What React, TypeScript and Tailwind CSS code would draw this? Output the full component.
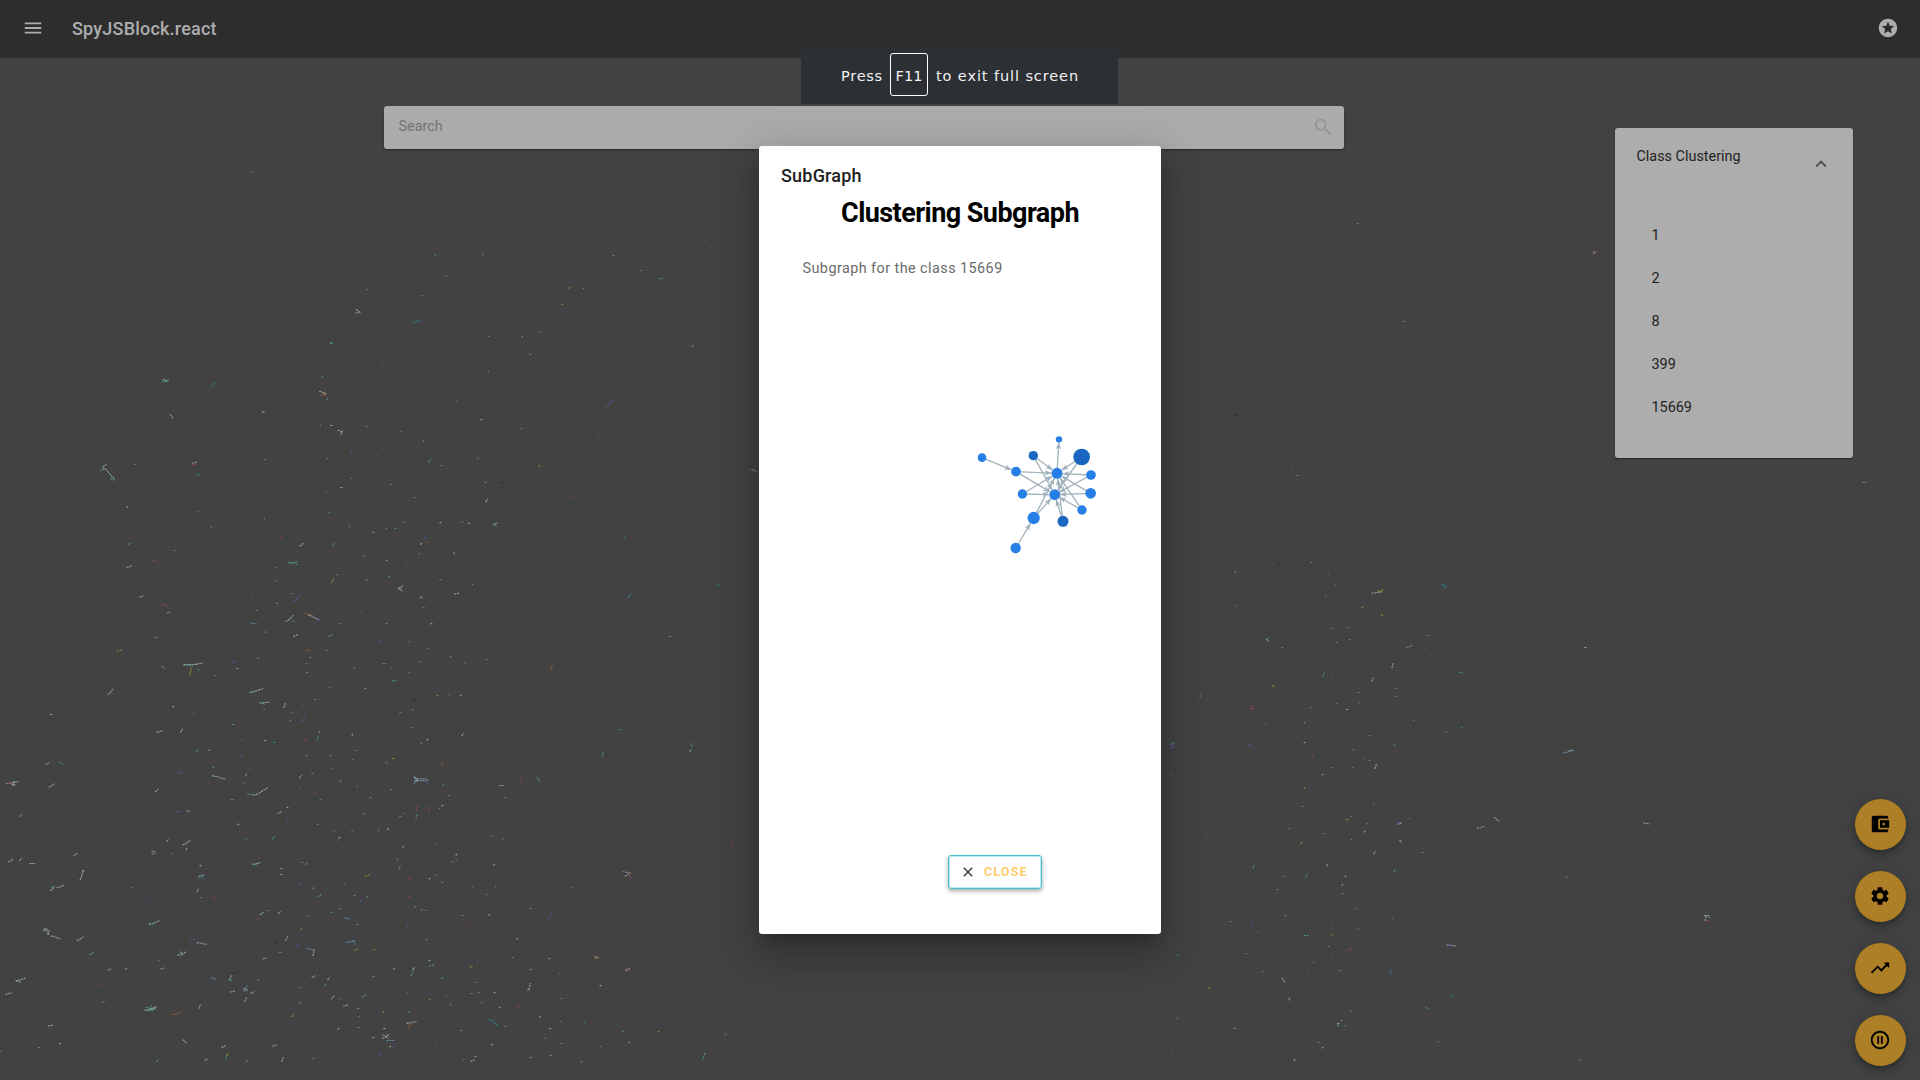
import React from "react";
import {
  MdAccountBalanceWallet,
  MdClose,
  MdExpandLess,
  MdMenu,
  MdPauseCircleOutline,
  MdSearch,
  MdSettings,
  MdStars,
  MdTrendingUp,
} from "react-icons/md";

const TONES: Record<string, string> = {
  w: "#9fb0b0",
  g: "#7f8a8a",
  t: "#4f9a7c",
  b: "#6590a8",
  p: "#5a54a0",
  r: "#8f4552",
  o: "#9a6238",
  y: "#8a9440",
  d: "#1d2a33",
  c: "#2a8c9c",
};

type Region = { x: number; y: number; sx: number; sy: number; marks: string };

// Each mark is "x,y,width,rise,tone" in the region's own units; a negative rise slopes down.
const REGIONS: Region[] = [
  {
    x: 0, y: 540, sx: 3, sy: 2.904,
    marks:
      "387,11,11,5,t 523,30,4,1,g 904,14,14,9,w 1000,14,8,9,t 1092,46,8,4,g 465,62,18,-5,r 389,78,17,5,w 877,68,30,-7,t 880,66,24,4,t 828,80,6,3,t 830,119,7,4,t 1012,100,5,2,g 996,118,10,12,y 1098,114,5,7,g 423,163,12,4,w 757,165,5,7,r 497,189,20,-10,r 504,210,10,3,w 878,155,4,1,t 892,167,22,20,p 831,183,9,-3,b 768,205,6,0,g 1083,207,6,0,p 924,215,26,-8,o 940,226,34,-14,w 955,232,8,6,p 867,227,24,18,w 881,237,6,-5,t 761,243,20,-3,b 1018,242,5,2,g 797,269,7,-5,t 468,282,11,2,b 886,276,14,6,w 991,277,12,6,b 1137,295,3,9,p 357,322,15,2,y 924,321,15,-3,o 979,322,6,-3,g 932,341,10,0,g 776,344,9,0,t 920,360,5,0,b 570,362,42,0,w 565,365,30,-2,t 597,359,20,3,w 571,383,1,24,y 703,354,12,5,p 489,371,11,-5,b 595,377,7,3,t 713,374,5,2,w 1064,371,8,3,t 645,394,7,0,t 922,384,8,0,g 770,436,42,12,w 757,440,16,3,t 330,440,18,19,w 989,429,4,3,b 1097,431,8,0,b 946,464,8,0,t 794,471,30,3,w 790,474,10,-2,t 853,481,5,14,w 878,501,5,4,t 792,493,8,-3,t 1134,474,4,11,p 906,482,6,3,r 520,483,6,5,w 155,506,10,0,w 581,503,4,1,o 911,519,12,16,p 872,525,4,2,t 700,536,9,0,t 479,556,19,4,w 544,552,8,10,w 728,579,4,1,o 796,583,9,0,w 822,588,8,0,c 916,583,9,-2,r 951,577,5,13,t 958,555,1,8,g 1058,566,4,6,w 593,610,10,4,t 627,612,9,-2,b 723,629,9,0,p 919,627,6,2,b 990,626,4,1,b 1070,611,4,1,b 1057,636,7,4,y 143,649,11,5,w 183,648,11,-6,t 639,660,6,-4,t 751,666,5,1,o 998,664,4,4,t 542,675,17,4,p 655,691,40,-10,w 657,689,10,2,r 739,681,8,4,w 733,703,8,3,t 624,706,9,3,r 901,686,7,8,w 937,679,7,-3,g 1020,699,5,8,b 38,705,38,6,w 30,707,20,-2,r 40,709,12,-2,w 39,706,2,14,w 154,713,18,10,w 1073,716,8,0,o 468,728,10,7,w 780,729,44,22,w 750,740,20,-2,t 901,723,8,-3,p 949,732,3,10,r 938,740,7,-2,p 960,753,5,2,t 696,753,11,0,t 1112,747,4,0,g 861,777,7,-3,w 535,789,14,0,p 564,789,10,-5,w 62,799,10,6,b 838,792,12,6,w 1093,793,8,3,y 862,817,6,-5,p 714,826,9,-3,w 951,826,5,-1,g 1058,846,8,0,o 1003,843,8,3,t 1134,844,4,3,t 738,866,9,3,t 821,864,9,9,t 1018,863,6,5,w 1030,889,4,3,r 841,880,5,0,p 501,874,9,5,w 559,879,25,14,w 558,896,5,5,w 558,903,6,-4,r 517,909,7,2,o 460,911,12,3,w 460,906,12,-3,w 1058,908,6,0,r 225,913,12,6,w 31,930,13,7,w 61,927,8,8,w 97,940,19,0,w 777,923,5,2,r 768,940,24,6,w 764,941,16,-4,t 907,937,8,0,t 918,938,4,7,b 600,945,6,5,w 603,973,18,4,w 604,981,18,3,c 245,974,10,27,w 251,961,9,2,w 157,1011,15,13,w 158,1009,10,-5,t 182,1006,23,7,w 843,954,6,2,w 843,971,8,0,w 730,977,4,1,r 1101,974,15,5,y 900,998,4,9,p 1033,997,4,1,t 940,1013,6,-5,g 397,1008,4,2,t 593,1019,1,10,w 604,1038,8,3,b 641,1039,8,-15,r 957,1031,14,9,t 1064,1033,5,0,g 1101,1034,7,4,t 447,1049,9,2,p 1084,1048,8,5,p 1020,1070,9,3,g 994,1081,9,-3,t 785,1085,11,7,w 806,1076,6,1,t 837,1083,10,5,w 776,1098,9,5,r 921,1091,5,3,t 1041,1100,16,-4,b 1073,1116,6,2,b 462,1110,34,12,w 456,1114,20,4,t 385,1131,6,-3,r 904,1128,2,6,y 140,1136,15,-18,w 137,1131,16,5,w 145,1140,6,14,w 167,1154,30,-9,w 240,1156,22,13,w 578,1161,14,-5,p 605,1173,30,-5,w 860,1157,8,12,w 829,1169,8,4,d 1050,1166,30,4,b 1060,1169,8,-10,b 893,1178,6,-8,p 931,1189,24,-5,b 941,1197,4,20,w 275,1202,12,7,b 546,1201,26,10,w 543,1202,7,-10,w 536,1205,9,2,t 840,1197,10,0,b 1070,1190,12,6,y 1122,1189,10,3,y 792,1214,12,3,w 475,1220,4,1,g 379,1244,9,4,w 327,1246,11,3,w 486,1245,12,3,w 706,1256,19,6,d 691,1271,5,16,w 690,1278,14,-8,t 640,1273,14,-4,b 775,1277,9,4,g 984,1273,7,7,w 977,1290,4,7,t 940,1268,11,5,w 1119,1268,6,2,b 62,1276,30,8,w 54,1281,14,-4,w 304,1291,7,4,r 735,1303,10,18,b 736,1306,14,-5,w 698,1311,16,3,w 757,1315,12,4,w 900,1299,6,1,t 25,1316,19,5,w 311,1339,10,3,b 737,1334,8,12,w 996,1329,10,9,w 1092,1323,15,7,b 1018,1332,5,2,t 902,1342,8,6,g 451,1360,37,11,w 451,1360,30,-6,t 450,1358,6,14,t 460,1360,16,6,w 447,1365,22,0,t 597,1354,6,12,w 1037,1353,14,3,w 1074,1360,8,0,g 530,1375,28,7,o 878,1382,10,7,y 1076,1384,5,1,g 152,1409,14,2,w 1076,1415,7,0,b 1015,1420,8,4,w 1119,1446,7,2,w 554,1455,11,-10,w 180,1461,9,3,w 118,1473,8,0,b 671,1472,13,6,w 822,1469,13,4,w 1,1486,4,3,b 1137,1490,3,12,p 680,1501,4,18,t 681,1495,4,9,y 620,1508,11,4,w 473,1511,1,9,t 742,1512,8,5,b 847,1508,6,13,w 941,1505,4,1,g",
  },
  {
    x: 380, y: 540, sx: 3, sy: 2.904,
    marks:
      "124,9,8,5,w 143,8,7,0,r 117,38,6,4,t 224,38,8,-4,w 364,37,5,-5,r 19,60,6,-3,w 80,65,6,1,r 182,65,4,1,p 28,106,8,3,t 182,114,6,1,g 62,138,16,12,w 62,143,12,-13,w 276,129,5,1,g 123,167,9,-4,w 230,154,15,2,w 749,160,9,13,c 1016,128,11,6,c 1,194,4,1,r 130,196,6,2,b 18,242,5,2,y 155,243,9,2,w 872,279,10,0,g 89,296,3,3,t 143,316,3,3,g 211,337,4,3,g 318,346,5,1,g 120,352,7,0,t 257,357,4,4,g 13,358,12,0,t 35,371,5,0,t 89,384,4,1,g 514,371,6,14,o 42,408,17,4,t 172,451,6,0,y 209,450,3,3,t 240,453,6,3,w 100,465,10,4,d 98,493,3,4,g 60,500,7,2,t 98,544,6,0,g 246,564,6,8,w 143,579,3,5,w 123,591,6,-4,g 719,550,11,0,c 139,622,4,0,r 667,622,5,14,t 41,634,7,0,y 19,647,4,2,t 186,652,10,-6,o 940,604,26,0,d 934,598,6,-12,t 932,610,4,6,w 105,700,12,14,b 107,694,10,-12,w 123,697,45,3,w 120,694,38,0,b 138,705,14,-10,p 108,692,14,-5,b 190,709,4,8,t 425,695,4,18,r 474,695,10,-12,t 364,714,13,0,w 377,747,4,0,g 35,724,9,0,g 209,742,6,1,t 186,770,7,2,w 177,781,3,3,g 108,783,1,22,r 109,802,2,14,t 149,781,2,20,r 61,803,9,2,t 71,795,3,2,o 26,840,8,-5,w 336,857,6,3,t 369,868,6,2,y 70,889,7,5,w 168,881,7,0,o 230,912,4,5,w 230,932,4,3,t 216,935,5,2,t 51,929,5,-3,g 57,950,2,11,b 344,943,9,4,w 1055,879,4,18,r 740,966,24,-3,w 741,971,16,8,w 748,975,10,-16,r 733,968,10,-8,d 752,983,6,-3,p 88,984,16,-3,r 147,983,5,4,w 168,974,6,-2,t 186,995,8,0,t 276,1005,5,2,g 347,1007,3,3,g 576,1008,6,0,o 87,1034,9,3,r 320,1030,5,-3,g 106,1064,7,4,t 125,1073,3,4,g 137,1076,5,0,t 452,1070,5,0,g 508,1094,11,18,p 248,1090,4,0,g 327,1088,8,4,w 122,1108,5,0,r 83,1119,2,10,p 268,1120,7,6,r 412,1156,7,4,w 125,1154,8,3,r 140,1161,4,3,g 396,1212,5,0,g 509,1216,5,2,w 650,1211,15,6,o 650,1211,12,-6,w 741,1246,14,6,w 741,1246,12,-7,r 43,1243,9,4,w 96,1253,11,27,t 100,1245,8,4,w 155,1235,15,3,t 147,1222,6,2,w 186,1271,8,5,t 275,1239,8,5,y 293,1225,7,5,p 452,1248,5,1,w 537,1259,4,4,o 286,1284,6,0,b 448,1297,4,20,w 445,1305,8,3,w 662,1293,6,4,w 83,1315,5,0,o 149,1334,4,3,y 200,1322,4,1,o 211,1348,6,3,t 274,1316,6,0,g 296,1314,5,3,b 342,1315,6,2,w 305,1343,12,3,o 359,1358,5,3,w 412,1357,5,18,r 545,1331,4,1,g 581,1364,4,4,p 9,1368,5,5,y 89,1368,3,5,t 482,1384,8,4,w 540,1398,5,0,t 612,1401,4,0,c 340,1401,26,-18,c 95,1402,30,5,w 87,1409,4,19,o 375,1412,5,0,g 13,1419,8,3,w 245,1424,7,0,g 512,1418,8,2,w 730,1426,8,-3,t 834,1427,4,1,y 1037,1437,5,3,t 495,1448,5,-2,t 17,1443,20,12,w 17,1442,18,-10,w 32,1452,25,0,b 44,1472,9,3,p 30,1470,8,3,w 167,1458,4,2,p 337,1464,9,3,w 545,1462,4,0,g 748,1460,8,0,g 662,1470,5,0,g 969,1499,10,22,t 276,1512,12,4,w 285,1500,6,1,w 251,1510,3,3,t 452,1504,4,3,w 512,1497,4,1,w 604,1513,7,3,t",
  },
  {
    x: 0, y: 140, sx: 2.0605, sy: 3,
    marks:
      "520,96,4,-4,t 897,342,4,6,t 994,344,3,3,g 919,409,5,-4,g 756,447,2,4,g 870,467,3,1,t 738,515,10,-12,w 736,516,8,5,w 859,545,14,8,c 684,607,5,1,t 684,610,5,1,t 788,667,5,4,p 1454,304,3,1,r 1265,346,3,1,g 1321,391,3,1,t 1364,415,8,2,t 1173,441,6,5,y 1203,444,3,3,b 1159,493,3,1,y 1114,576,4,-3,t 1007,590,3,0,g 1077,588,5,4,g 1094,643,5,0,t 1007,693,4,4,g 1426,617,4,8,g 342,721,14,6,t 342,721,10,-8,w 342,723,14,0,t 439,732,8,10,c 665,709,2,7,t 667,760,11,10,o 665,757,14,-8,w 667,762,9,0,o 670,764,6,4,o 674,775,3,9,g 354,829,7,-12,w 543,817,10,0,p 542,814,6,2,w 941,782,3,3,o 978,826,6,6,r 992,838,5,3,w 1255,790,17,20,p 660,855,3,3,g 684,857,5,0,w 702,875,11,-8,w 704,877,4,12,w 755,858,4,-3,b 827,873,4,-3,t 873,900,4,6,g 1074,866,3,2,g 1220,892,3,1,d 788,924,3,3,r 725,937,3,6,p 548,958,3,1,g 675,954,4,4,t 886,962,6,10,t 984,955,3,2,t 910,976,3,1,g 1111,975,4,5,y 211,988,10,8,b 215,976,8,6,w 223,999,24,-34,w 231,1017,9,-4,t 279,972,5,-2,b 401,966,10,3,w 401,973,8,2,r 401,969,4,9,r 410,1003,8,5,c 725,1014,4,-4,t 704,1043,5,0,w 672,1053,4,-3,o 807,1034,5,0,g 1000,1027,3,2,g 1035,1026,7,5,d 854,1072,3,1,g 1002,1080,1,10,w 1176,1070,5,5,r 1551,990,13,-7,o 1554,992,8,-8,t 262,1102,4,-7,w 409,1115,5,-3,o 678,1117,3,1,t 544,1136,4,-4,g 436,1159,5,3,t 720,1158,3,3,t 832,1148,4,-2,g 908,1146,5,3,w 953,1143,5,4,t 967,1150,6,-2,w 1022,1149,8,4,w 1022,1155,8,-4,t 797,1164,3,3,t 815,1166,5,0,t 769,1178,4,-4,w 581,1192,6,2,r 876,1193,4,5,p 1286,1193,4,1,c",
  },
  {
    x: 1160, y: 560, sx: 2.306, sy: 3,
    marks:
      "274,12,5,4,d 349,8,4,0,g 175,33,4,5,b 389,43,4,6,r 405,72,5,3,o 382,109,4,1,o 500,96,22,4,w 510,92,10,10,y 509,94,12,-4,y 656,77,13,-5,c 655,81,4,7,c 467,142,5,-3,y 173,135,2,8,o 512,167,8,-5,y 395,205,4,1,t 433,202,4,2,g 620,227,5,0,t 248,236,7,6,t 248,240,7,-6,w 436,238,4,1,t 407,248,4,0,g 282,262,4,1,t 575,258,14,5,b 579,255,4,3,o 610,265,4,1,r 982,262,5,1,w 537,315,2,14,w 378,342,2,12,t 397,342,4,-3,p 489,358,2,12,w 692,338,10,-3,t 262,379,7,-4,y 544,386,3,0,g 458,397,4,0,y 543,409,4,0,g 93,407,4,16,o 212,443,10,8,r 214,443,4,-14,r 213,446,9,0,r 347,442,3,3,t 407,431,4,1,y 458,427,4,3,g 433,449,7,0,w 584,481,4,0,o 334,488,2,5,g 244,490,4,0,o 695,502,6,2,c 660,517,5,-2,t 483,527,4,0,t 28,551,10,6,t 29,557,12,-5,p 28,561,12,2,p 333,548,4,0,w 209,555,14,-7,p 541,555,5,-3,t 446,567,4,3,t 941,575,24,8,b 947,572,10,3,w 351,590,3,9,r 472,597,4,6,o 482,601,2,3,g 498,620,2,14,w 396,623,4,0,t 444,621,4,-3,t 26,642,6,2,r 374,642,3,3,w 333,683,4,5,y 428,728,4,1,r 328,739,4,0,y 492,730,3,4,o 442,770,4,2,t 432,779,9,3,y 552,791,14,-8,p 553,790,10,4,w 575,776,4,-2,o 478,791,3,2,t 775,778,13,-12,w 739,802,17,6,w 736,803,10,3,p 1122,790,15,-3,w 299,805,3,1,t 472,814,3,4,w 376,821,3,1,g 112,830,8,3,r 441,837,3,3,y 327,846,3,8,y 555,843,5,-8,w 494,878,2,9,w 605,876,3,1,g 387,917,6,-4,w 216,920,2,11,t 540,930,2,10,t 337,947,4,13,t 284,949,4,1,t 428,949,4,-4,w 938,953,4,-6,b 420,973,2,7,w 272,989,3,1,t 420,999,2,2,g 215,1020,4,2,p 347,1020,3,2,r 5,1023,4,2,p 450,1045,3,3,t 289,1067,4,1,t 1261,1066,12,0,w 1258,1075,3,14,w 1264,1082,9,2,r 1266,1073,4,-8,b 162,1084,4,0,g 210,1091,2,13,p 395,1097,5,3,r 535,1075,4,0,t 457,1105,2,6,t 227,1118,4,-2,o 397,1122,5,4,y 338,1127,12,0,t 388,1160,4,0,g 437,1168,11,7,r 673,1157,22,-4,w 667,1156,10,3,p 199,1179,4,0,t 41,1184,5,5,c 398,1193,5,-2,p 355,1207,4,4,o 416,1231,3,1,g 532,1234,3,16,c 236,1235,3,3,t 342,1240,4,1,r 285,1261,8,-14,w 113,1282,6,2,y 266,1302,4,0,r 298,1318,4,-9,w 673,1307,8,5,c 617,1345,8,-6,t 442,1354,6,-2,b 380,1367,3,2,p 41,1376,4,-3,t 419,1382,4,3,y 412,1391,6,1,w 412,1396,7,2,t 427,1397,3,4,t 171,1404,4,-3,w 366,1446,5,-3,b 642,1444,6,3,t 375,1461,4,4,w 28,1474,4,1,p 311,1497,2,8,w 967,1497,2,4,y",
  },
  {
    x: 1280, y: 0, sx: 2.45, sy: 3,
    marks: "190,670,3,2,g 771,755,10,-3,r 771,756,7,4,w 304,965,6,0,g 30,1400,4,1,r 44,1427,3,0,g",
  },
  {
    x: 0, y: 0, sx: 1, sy: 1,
    marks: "1864,482,4,0,g 1235,415,3,-1,d",
  },
];

// Centres a stroke on a pixel so that thin marks stay crisp.
const snap = (v: number) => Math.floor(v) + 0.5;

function ClassMap() {
  return (
    <svg className="absolute inset-0" width="1920" height="1080" viewBox="0 0 1920 1080" fill="none">
      {REGIONS.map((r, i) =>
        r.marks.split(" ").map((m, j) => {
          const [mx, my, mw, mh, tone] = m.split(",");
          const x = snap(r.x + Number(mx) / r.sx);
          const y = snap(r.y + Number(my) / r.sy);
          const w = Math.max(1.8, Number(mw) / r.sx) / 2;
          const h = Number(mh) / r.sy / 2;
          return (
            <path
              key={`${i}-${j}`}
              d={`M${x - w} ${y + h}L${x - w * 0.3} ${y + h * 0.6}L${x + w * 0.3} ${y - h * 0.2}L${x + w} ${y - h}`}
              stroke={TONES[tone]}
              strokeWidth={1.1}
              strokeOpacity={0.85}
              strokeDasharray="2.2 0.7"
            />
          );
        })
      )}
    </svg>
  );
}

type Node = { x: number; y: number; r: number; dark?: boolean };

const NODES: Node[] = [
  { x: 66, y: 113, r: 13 },
  { x: 168, y: 155, r: 14.5 },
  { x: 220, y: 107, r: 14, dark: true },
  { x: 297, y: 58, r: 9.5 },
  { x: 365, y: 111, r: 25, dark: true },
  { x: 291, y: 160, r: 16.5 },
  { x: 393, y: 165, r: 14.5 },
  { x: 187, y: 222, r: 14 },
  { x: 284, y: 224, r: 16 },
  { x: 392, y: 220, r: 16 },
  { x: 366, y: 270, r: 14 },
  { x: 309, y: 304, r: 16.5, dark: true },
  { x: 221, y: 294, r: 18.5 },
  { x: 167, y: 384, r: 15.5 },
];

const EDGES: [number, number][] = [
  [0, 1], [1, 5], [1, 8], [2, 5], [2, 8], [5, 3], [4, 5], [4, 8], [6, 5], [6, 8],
  [7, 5], [7, 8], [9, 5], [9, 8], [10, 5], [10, 8], [11, 5], [11, 8], [12, 5], [12, 8], [13, 12],
];

function Subgraph() {
  return (
    <svg width="160" height="150" viewBox="0 0 480 450">
      {EDGES.map(([a, b]) => {
        const s = NODES[a];
        const t = NODES[b];
        const len = Math.hypot(t.x - s.x, t.y - s.y);
        const ux = (t.x - s.x) / len;
        const uy = (t.y - s.y) / len;
        const tx = t.x - ux * t.r;
        const ty = t.y - uy * t.r;
        const bx = tx - ux * 20;
        const by = ty - uy * 20;
        return (
          <g key={`${a}-${b}`} fill="#9fb1ba" stroke="#a3b4bc">
            <line x1={s.x} y1={s.y} x2={tx} y2={ty} strokeWidth="4" />
            <path
              stroke="none"
              d={`M${tx} ${ty}L${bx - uy * 8} ${by + ux * 8}L${bx + ux * 4} ${by + uy * 4}L${bx + uy * 8} ${by - ux * 8}Z`}
            />
          </g>
        );
      })}
      {NODES.map((n, i) => (
        <circle key={i} cx={n.x} cy={n.y} r={n.r} fill={n.dark ? "#1a66c0" : "#267fe6"} />
      ))}
    </svg>
  );
}

const ACTIONS = [MdAccountBalanceWallet, MdSettings, MdTrendingUp, MdPauseCircleOutline];
const CLASSES = ["1", "2", "8", "399", "15669"];

export default function App() {
  return (
    <div className="relative h-[1080px] w-[1920px] overflow-hidden bg-[#424242] font-['Roboto',sans-serif]">
      <ClassMap />

      <header className="relative flex h-[58px] items-center bg-[#2d2d2d] pr-[21px] pb-[2px] pl-[21.5px] text-[#adadad]">
        <MdMenu size={22} />
        <h1 className="ml-[28.5px] grow text-[18px] font-medium tracking-[0.2px]">SpyJSBlock.react</h1>
        <MdStars size={22} />
      </header>

      <div className="relative mt-12 ml-[384px] flex h-[43px] w-[960px] items-start justify-between rounded-[3px] bg-[#ababab] pt-[10px] pr-[10px] pl-[14.5px] shadow-[0_1px_2px_rgba(0,0,0,0.4)]">
        <span className="text-[14.4px] leading-[22px] text-[#757575]">Search</span>
        <MdSearch size={22} className="text-[#959595]" />
      </div>

      <aside className="absolute top-32 left-[1615px] h-[330px] w-[238px] rounded-[3px] bg-[#adadad] text-[14.4px] text-[#222] shadow-[0_1px_2px_rgba(0,0,0,0.4)]">
        <div className="flex justify-between pt-[18px] pr-[21px] pl-[21.5px] leading-[21px]">
          <span>Class Clustering</span>
          <MdExpandLess size={22} className="mt-[7px] text-[#505050]" />
        </div>
        <ul className="mt-[39px] pl-[36.5px]">
          {CLASSES.map((c) => (
            <li key={c} className="h-[43px] leading-[43px]">
              {c}
            </li>
          ))}
        </ul>
      </aside>

      <nav className="absolute top-[799px] left-[1855px] flex flex-col gap-[21px]">
        {ACTIONS.map((Icon, i) => (
          <button
            key={i}
            className="flex size-[51px] items-center justify-center rounded-full bg-[#ad7f26] pr-px pb-px text-black shadow-[0_3px_5px_-1px_rgba(0,0,0,0.2),0_5px_9px_rgba(0,0,0,0.14),0_1px_16px_rgba(0,0,0,0.12)]"
          >
            <Icon size={22} />
          </button>
        ))}
      </nav>

      <section className="absolute top-[146px] left-[759px] flex h-[788px] w-[402px] flex-col rounded-[3px] bg-white shadow-[0_10px_14px_-6px_rgba(0,0,0,0.2),0_22px_34px_3px_rgba(0,0,0,0.14),0_8px_41px_7px_rgba(0,0,0,0.12)]">
        <h2 className="mt-[15px] ml-[22px] text-[18px] leading-[29px] font-medium tracking-[0.2px] text-[#212121]">SubGraph</h2>
        <h3 className="mt-[6px] text-center text-[27px] leading-[34px] font-bold tracking-[-0.55px] text-black">Clustering Subgraph</h3>
        <p className="mt-[28px] ml-[43.5px] text-[14.4px] leading-[22px] tracking-[0.44px] text-[#6b6b6b]">Subgraph for the class 15669</p>
        <div className="mt-[140px] ml-[201px]">
          <Subgraph />
        </div>
        <button className="mt-[285px] ml-[189px] flex h-[34px] w-[94px] items-center rounded-[3px] border border-[#4dbccb] pl-[11px] shadow-[inset_0_0_0_1px_rgba(77,208,225,0.4),0_2px_4px_rgba(0,0,0,0.35)]">
          <MdClose size={16} className="text-[#37373a]" />
          <span className="ml-[8px] text-[12.6px] font-bold tracking-[1.1px] text-[#ffcd6b]">CLOSE</span>
        </button>
      </section>

      <div className="absolute top-[46px] left-[801px] flex h-[58px] w-[317px] items-center bg-[#2c2f33] pl-[40px] font-['DejaVu_Sans',sans-serif] text-[14.5px] whitespace-pre text-[#f2f3f3]">
        <span className="w-[49px] pt-[4px] tracking-[0.75px]">Press</span>
        <kbd className="-mt-px flex h-[43px] w-[38px] items-center justify-center rounded-[3px] border border-white pt-[5px] font-['DejaVu_Sans',sans-serif] text-[14.5px]">
          F11
        </kbd>
        <span className="ml-[8px] pt-[4px] tracking-[0.9px]">to exit full screen</span>
      </div>
    </div>
  );
}
